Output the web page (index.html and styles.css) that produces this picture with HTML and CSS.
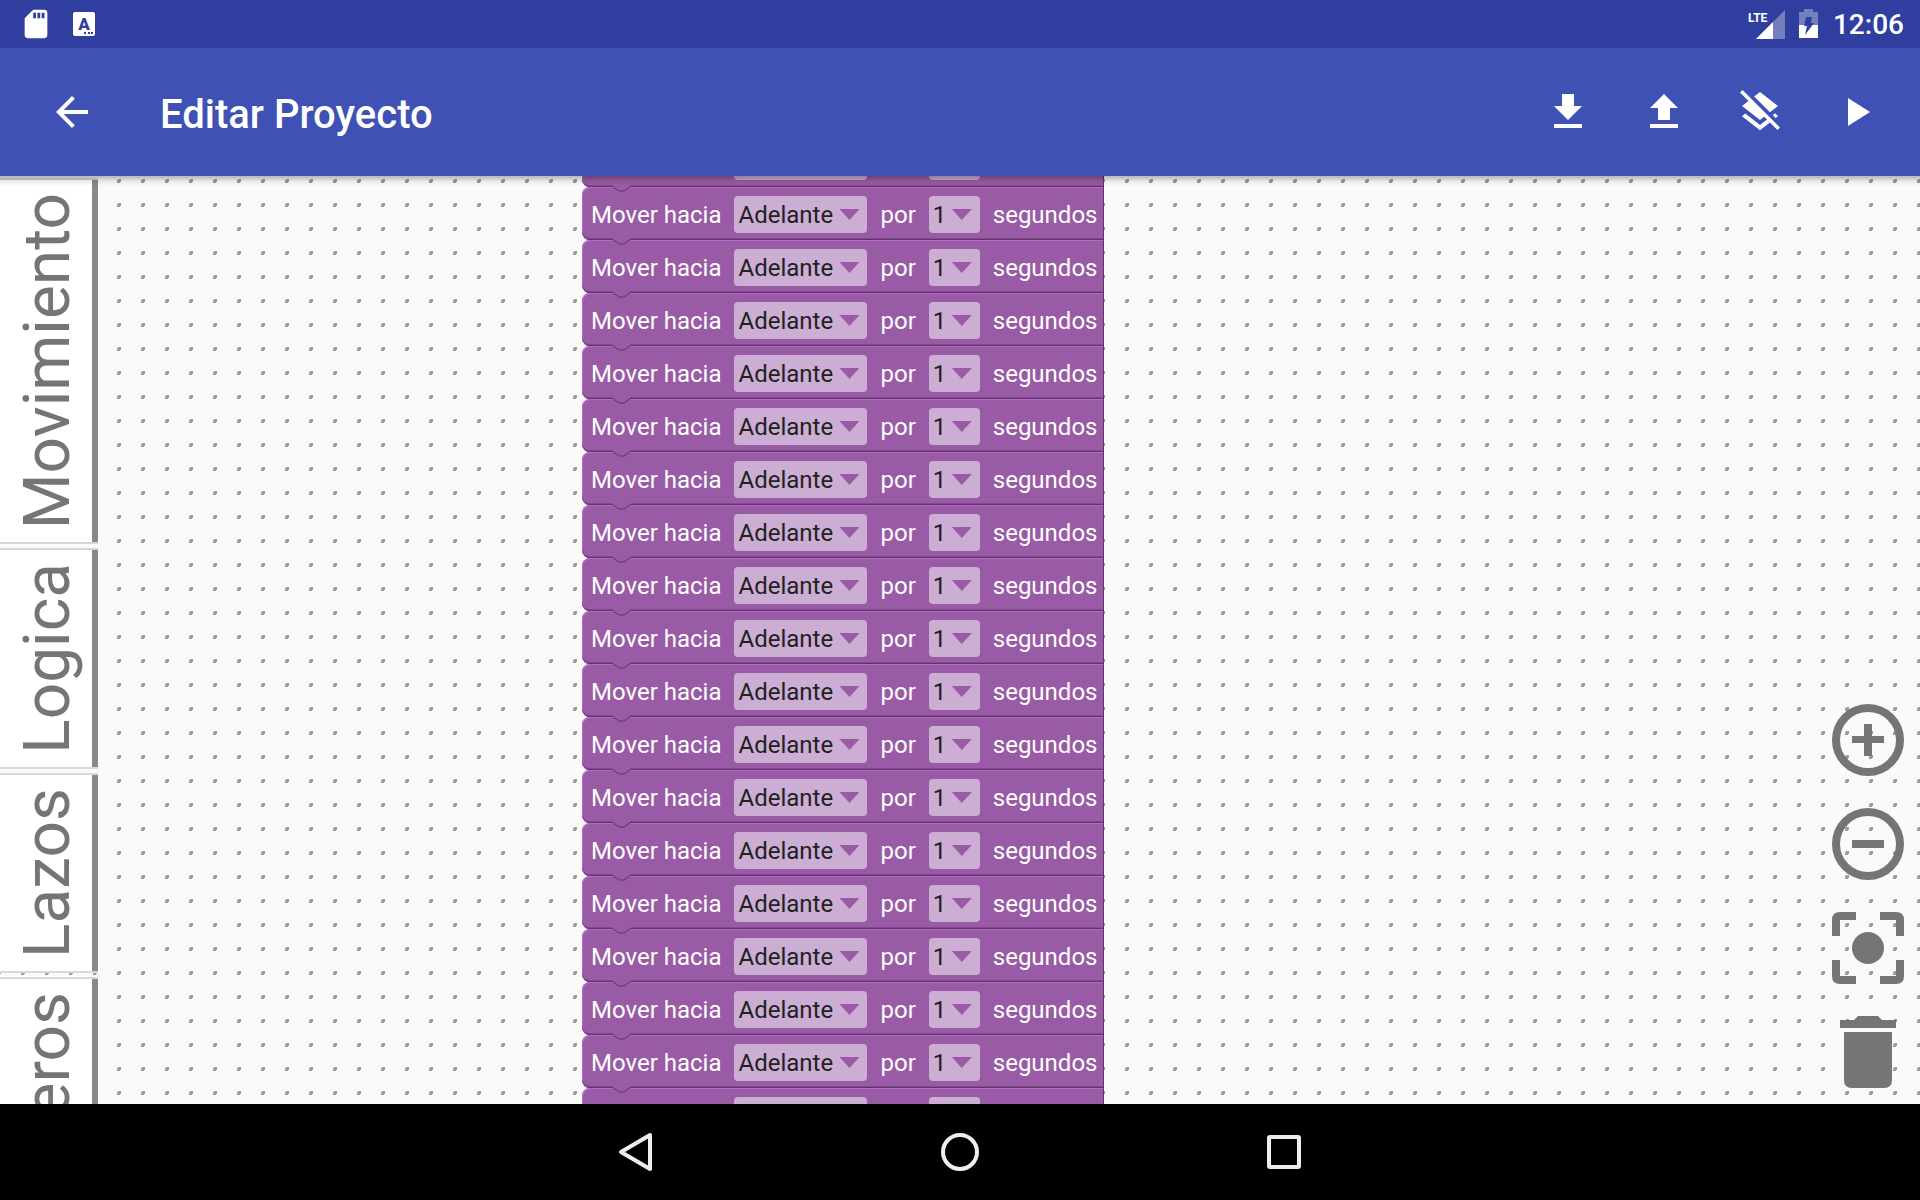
FILE: index.html
```html
<!DOCTYPE html>
<html lang="es">
<head>
<meta charset="utf-8">
<title>Editar Proyecto</title>
<link rel="stylesheet" href="styles.css">
</head>
<body>
<div class="status">
  <svg class="status-icon" viewBox="0 0 24 24"><path d="M18 2h-8L4 8v12c0 1.100.9 2 2 2h12c1.100 0 2-.9 2-2V4c0-1.100-.9-2-2-2zm-6 6h-2V4h2v4zm3 0h-2V4h2v4zm3 0h-2V4h2v4z"/></svg>
  <svg class="status-icon" viewBox="0 0 34 34"><rect x="6" y="5" width="22" height="24" rx="2"/><text class="lang" x="17" y="23" text-anchor="middle">A</text><path class="dots" d="M17 25h2v2h-2zM21 25h2v2h-2zM24 25h2v2h-2z"/></svg>
  <div class="status-end">
    <svg class="signal" viewBox="0 0 38 34"><path class="faint" d="M38 3v29H9z"/><path d="M26 15v17H9z"/><text class="lte" x="1" y="15">LTE</text></svg>
    <svg class="battery" viewBox="0 0 20 34"><path class="faint" d="M5 2h9v3h5v13H0V5h5z"/><path d="M0 18h19v13H0z"/><path class="bolt" d="M7 10h6l-1 6h3L6 28l2-9H5z"/></svg>
    <span class="clock">12:06</span>
  </div>
</div>
<header class="appbar">
  <button class="bar-button back" aria-label="Atrás"><svg viewBox="0 0 24 24"><path d="M20 11H7.830l5.590-5.590L12 4l-8 8 8 8 1.410-1.410L7.830 13H20z"/></svg></button>
  <h1>Editar Proyecto</h1>
  <button class="bar-button" aria-label="Cargar"><svg viewBox="0 0 24 24"><path d="M19 9h-4V3H9v6H5l7 7zM5 18v2h14v-2z"/></svg></button>
  <button class="bar-button" aria-label="Guardar"><svg viewBox="0 0 24 24"><path d="M9 16h6v-6h4l-7-7-7 7h4zm-4 2h14v2H5z"/></svg></button>
  <button class="bar-button" aria-label="Borrar bloques"><svg viewBox="0 0 24 24"><path d="M19.810 14.990l1.190-.92-1.430-1.430-1.190.92 1.430 1.430zm-.45-4.720L21 9l-9-7-2.910 2.270 7.870 7.880 2.400-1.880zM3.270 1L2 2.270l4.220 4.220L3 9l1.630 1.270L12 16l2.100-1.630 1.430 1.430L12 18.540l-7.370-5.730L3 14.070l9 7 4.950-3.850L20.730 21 22 19.730 3.270 1z"/></svg></button>
  <button class="bar-button" aria-label="Ejecutar"><svg viewBox="0 0 24 24"><path d="M8 5v14l11-7z"/></svg></button>
</header>
<main class="workspace">
  <nav class="tabs">
    <button class="tab"><span>Movimiento</span></button>
    <button class="tab"><span>Logica</span></button>
    <button class="tab"><span>Lazos</span></button>
    <button class="tab"><span>Numeros</span></button>
  </nav>
  <div class="stack" id="stack"></div>
  <div class="tools">
    <button class="tool" aria-label="Acercar"><svg viewBox="0 0 72 72"><circle class="ring" cx="36" cy="36" r="32"/><path d="M32 20h8v12h12v7H40v13h-8V39H20v-7h12z"/></svg></button>
    <button class="tool" aria-label="Alejar"><svg viewBox="0 0 72 72"><circle class="ring" cx="36" cy="36" r="32"/><path d="M20 32h32v8H20z"/></svg></button>
    <button class="tool" aria-label="Centrar"><svg viewBox="0 0 72 72"><path class="ring" d="M4 24V8q0-4 4-4h16M48 4h16q4 0 4 4v16M68 48v16q0 4-4 4H48M24 68H8q-4 0-4-4V48"/><circle cx="36" cy="36" r="16"/></svg></button>
    <button class="tool" aria-label="Papelera"><svg viewBox="0 0 72 72"><path d="M8 4h14l4-4h20l4 4h14v8H8zM12 16h48v48q0 8-8 8H20q-8 0-8-8z"/></svg></button>
  </div>
</main>
<footer class="navbar">
  <button class="nav-button" aria-label="Volver"><svg viewBox="0 0 40 40"><path d="M34 3v34L5 20z"/></svg></button>
  <button class="nav-button" aria-label="Inicio"><svg viewBox="0 0 40 40"><circle cx="20" cy="20" r="17"/></svg></button>
  <button class="nav-button" aria-label="Recientes"><svg viewBox="0 0 40 40"><rect x="5" y="5" width="30" height="30" rx="1"/></svg></button>
</footer>
<template id="block">
  <div class="block">
    <span>Mover hacia</span>
    <span class="field"><select class="direction" aria-label="Dirección"><option>Adelante</option><option>Atrás</option></select></span>
    <span>por</span>
    <span class="field"><select class="seconds" aria-label="Segundos"><option>1</option><option>2</option></select></span>
    <span>segundos</span>
    <svg class="notch" viewBox="0 0 20 8"><path class="notch-fill" d="M0 0v2l7 5h5l7-5V0z"/><path class="notch-edge" d="M0 1l7 5h5l7-5"/></svg>
  </div>
</template>
<script src="app.js"></script>
</body>
</html>
```
FILE: app.js
```js
// The program is a run of identical "move" steps.
const stack = document.getElementById("stack");
const block = document.getElementById("block");
for (let i = 0; i < 19; i++) {
  stack.appendChild(block.content.cloneNode(true));
}
```
FILE: styles.css
```css
* { box-sizing: border-box; }
body {
  margin: 0;
  height: 100vh;
  display: flex;
  flex-direction: column;
  overflow: hidden;
  font-family: Roboto, sans-serif;
}
button { border: 0; padding: 0; background: none; font: inherit; color: inherit; }
svg { display: block; fill: currentColor; }

.status {
  flex: none;
  height: 48px;
  padding: 0 16px 0 19px;
  display: flex;
  align-items: center;
  gap: 14px;
  background: #303f9f;
  color: #fff;
}
.status-icon { width: 34px; height: 34px; }
.lang { font: 900 17px Roboto, sans-serif; fill: #303f9f; }
.dots, .bolt { fill: #303f9f; }
.status-end { margin-left: auto; display: flex; align-items: center; gap: 14px; }
.signal { width: 38px; height: 34px; }
.battery { width: 20px; height: 34px; }
.faint { fill: #747fbe; }
.lte { font: bold 12px "Liberation Sans Narrow", Roboto, sans-serif; }
.clock { padding-top: 2px; font-size: 28px; font-weight: 500; line-height: 32px; }

.appbar {
  flex: none;
  height: 128px;
  padding-right: 16px;
  display: flex;
  align-items: center;
  background: #3f51b5;
  color: #fff;
}
.appbar h1 { margin: 0 auto 0 16px; font-size: 40px; font-weight: 500; line-height: 48px; padding-top: 6px; }
.bar-button { width: 96px; height: 96px; display: grid; place-items: center; }
.bar-button svg { width: 48px; height: 48px; }
.back { width: 144px; }

.workspace {
  position: relative;
  flex: 1;
  min-height: 0;
  display: flex;
  justify-content: space-between;
  overflow: hidden;
  background-color: #fafafa;
  background-image: url("data:image/svg+xml,%3Csvg xmlns='http://www.w3.org/2000/svg' width='24' height='24'%3E%3Cpath fill='%239e9e9e' d='M1 0h3v3H3v1H0V1h1z'/%3E%3C/svg%3E");
  background-size: 24px 24px;
  background-position: 21px 3px;
}
.workspace::before {
  content: "";
  position: absolute;
  z-index: 2;
  inset: 0 0 auto 0;
  height: 10px;
  background: linear-gradient(rgba(0,0,0,.28), rgba(0,0,0,.08) 50%, rgba(0,0,0,0));
}

.tabs { padding-top: 2px; display: flex; flex-direction: column; gap: 4px; }
.tab {
  flex: none;
  width: 98px;
  padding: 13px 7px 13px 10px;
  border: solid #d8d8d8;
  border-width: 2px 0;
  box-shadow: inset -6px 0 #888;
  background: #fff;
  color: #757575;
  font-size: 64px;
  line-height: 75px;
}
.tab span { display: block; writing-mode: vertical-rl; transform: rotate(180deg); }

.stack { position: absolute; left: 582px; top: -42px; }
.block {
  position: relative;
  height: 53px;
  padding: 2px 7px 0 9px;
  display: flex;
  align-items: center;
  gap: 13px;
  border-radius: 8px 0 0 8px;
  background: #995ba5;
  box-shadow: inset -1px -1px #5c3763, inset 0 -2px #84498f, inset 1px 1px #b868cb;
  color: #fff;
  font-size: 24px;
  line-height: 28px;
  white-space: nowrap;
}
.field { position: relative; display: block; }
.field::after {
  content: "";
  position: absolute;
  right: 8px;
  top: 13px;
  width: 20px;
  height: 11px;
  background: #995ba5;
  clip-path: polygon(0 0, 100% 0, 50% 100%);
  pointer-events: none;
}
.field select {
  display: block;
  appearance: none;
  height: 37px;
  margin: 0;
  padding: 0 0 0 4px;
  border: 0;
  border-radius: 4px;
  background: #ccadd3;
  color: #212121;
  font: inherit;
}
.direction { width: 133px; }
.seconds { width: 51px; }
.notch { position: absolute; z-index: 1; left: 30px; top: 51px; width: 20px; height: 8px; }
.notch-fill { fill: #995ba5; }
.notch-edge { fill: none; stroke: #5c3763; }

.tools { margin-left: auto; padding: 0 16px 16px 0; display: flex; flex-direction: column; justify-content: flex-end; gap: 32px; color: #757575; }
.tool svg { width: 72px; height: 72px; }
.ring { fill: none; stroke: currentColor; stroke-width: 8px; }

.navbar { flex: none; height: 96px; display: flex; justify-content: center; background: #000; color: #eee; }
.nav-button { width: 324px; display: grid; place-items: center; }
.nav-button svg { width: 40px; height: 40px; fill: none; stroke: currentColor; stroke-width: 4px; stroke-linejoin: round; }
```
